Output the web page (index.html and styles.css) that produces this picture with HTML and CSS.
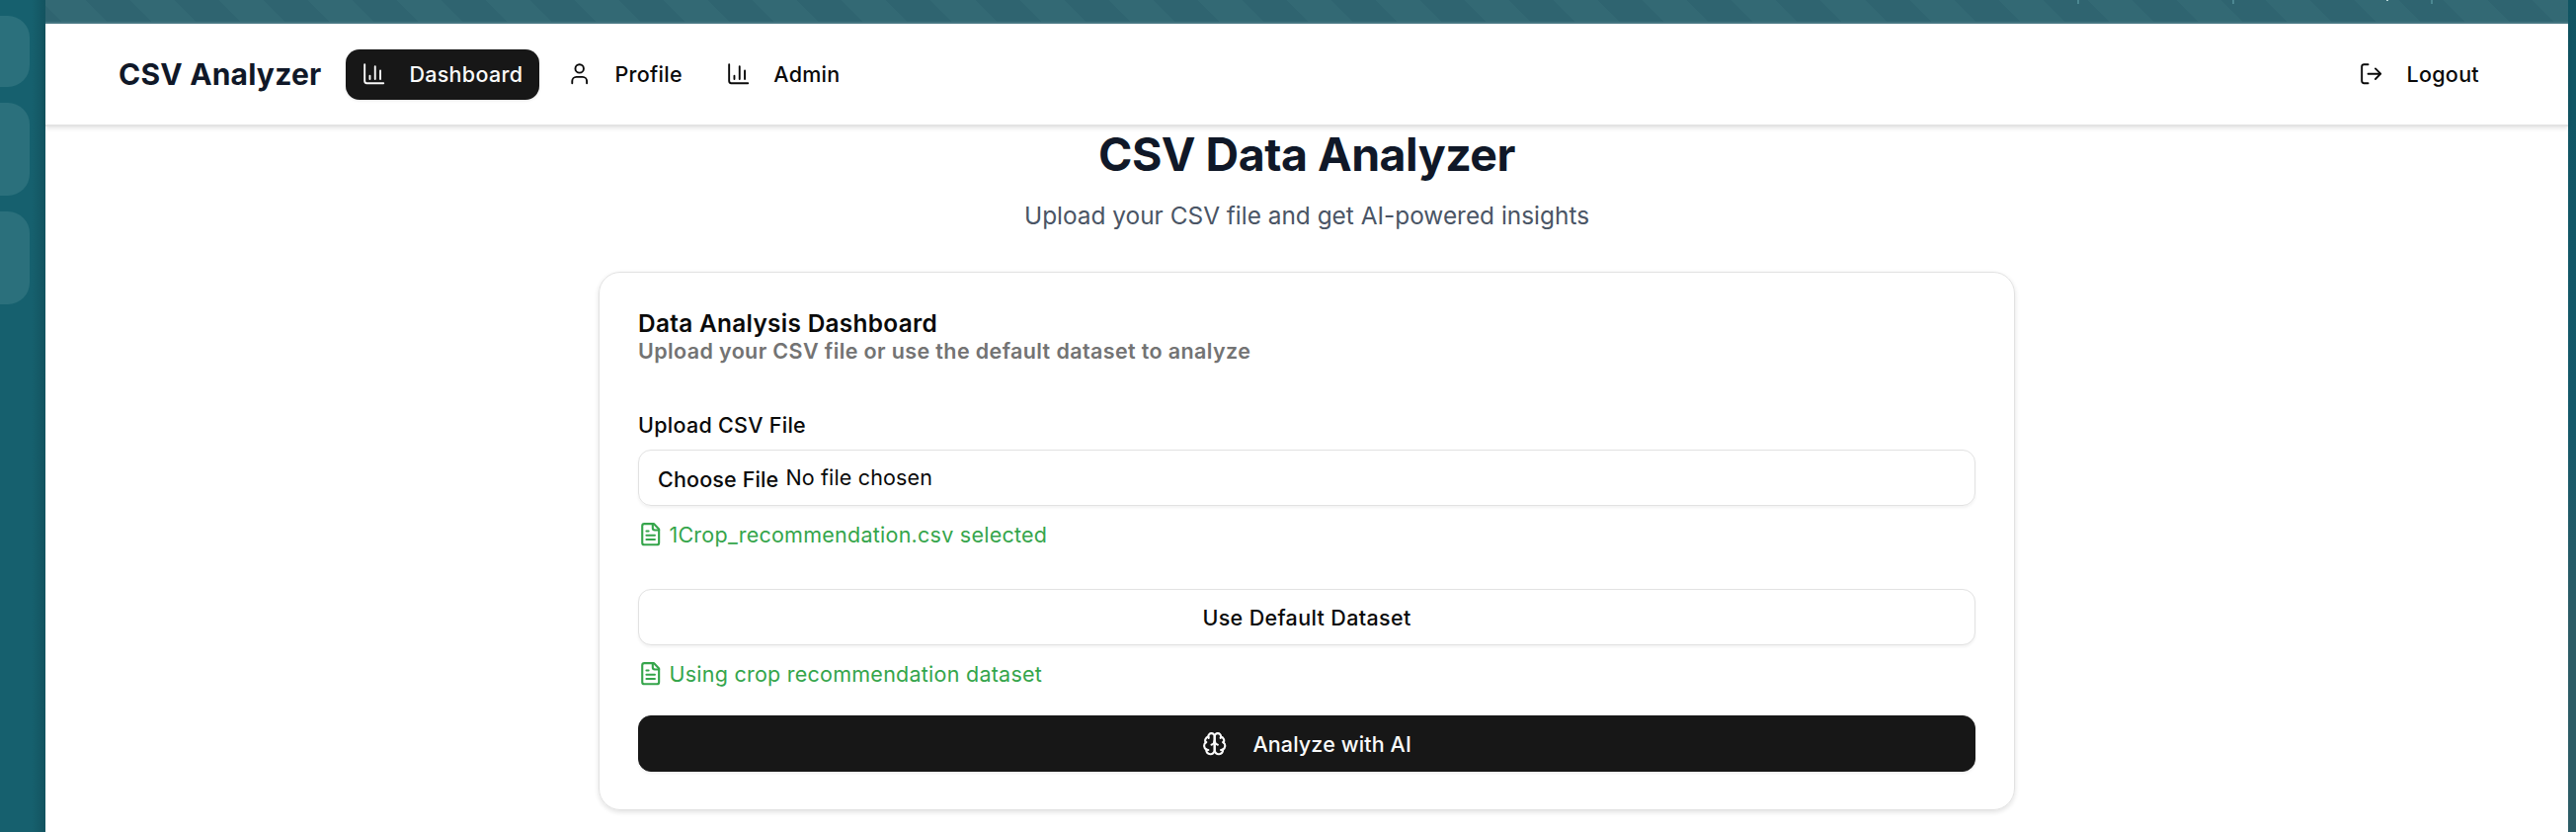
FILE: index.html
```html
<!DOCTYPE html>
<html lang="en">
<head>
<meta charset="utf-8">
<title>CSV Analyzer</title>
<link rel="stylesheet" href="styles.css">
</head>
<body>
<div class="desktop">
  <aside class="dock"><span class="tile tile-short"></span><span class="tile"></span><span class="tile"></span></aside>
  <div class="window">
    <div class="titlebar"><i class="tick t1"></i><i class="tick t2"></i><i class="dot"></i><i class="tick t3"></i></div>
    <nav class="nav">
      <span class="brand">CSV Analyzer</span>
      <a class="link active"><svg class="icon" viewBox="0 0 24 24"><path d="M3 3v16a2 2 0 0 0 2 2h16M18 17V9M13 17V5M8 17v-3"/></svg><span>Dashboard</span></a>
      <a class="link"><svg class="icon" viewBox="0 0 24 24"><path d="M19 21v-2a4 4 0 0 0-4-4H9a4 4 0 0 0-4 4v2"/><circle cx="12" cy="7" r="4"/></svg><span>Profile</span></a>
      <a class="link"><svg class="icon" viewBox="0 0 24 24"><path d="M3 3v16a2 2 0 0 0 2 2h16M18 17V9M13 17V5M8 17v-3"/></svg><span>Admin</span></a>
      <a class="link logout"><svg class="icon" viewBox="0 0 24 24"><path d="M9 21H5a2 2 0 0 1-2-2V5a2 2 0 0 1 2-2h4M16 17l5-5-5-5M21 12H9"/></svg><span>Logout</span></a>
    </nav>
    <main class="main">
      <h1 class="title">CSV Data Analyzer</h1>
      <p class="subtitle">Upload your CSV file and get AI-powered insights</p>
      <section class="card">
        <h2 class="card-title">Data Analysis Dashboard</h2>
        <p class="card-desc">Upload your CSV file or use the default dataset to analyze</p>
        <label class="label">Upload CSV File</label>
        <div class="field"><span class="choose">Choose File</span><span class="none">No file chosen</span></div>
        <p class="status"><svg class="icon file" viewBox="0 0 24 24"><path d="M15 2H6a2 2 0 0 0-2 2v16a2 2 0 0 0 2 2h12a2 2 0 0 0 2-2V7Z"/><path d="M14 2v4a2 2 0 0 0 2 2h4M10 9H8M16 13H8M16 17H8"/></svg><span>1Crop_recommendation.csv selected</span></p>
        <button class="button outline">Use Default Dataset</button>
        <p class="status"><svg class="icon file" viewBox="0 0 24 24"><path d="M15 2H6a2 2 0 0 0-2 2v16a2 2 0 0 0 2 2h12a2 2 0 0 0 2-2V7Z"/><path d="M14 2v4a2 2 0 0 0 2 2h4M10 9H8M16 13H8M16 17H8"/></svg><span>Using crop recommendation dataset</span></p>
        <button class="button solid"><svg class="icon file" viewBox="0 0 24 24"><path d="M12 5a3 3 0 1 0-5.997.125 4 4 0 0 0-2.526 5.77 4 4 0 0 0 .556 6.588A4 4 0 1 0 12 18Z"/><path d="M12 5a3 3 0 1 1 5.997.125 4 4 0 0 1 2.526 5.77 4 4 0 0 1-.556 6.588A4 4 0 1 1 12 18Z"/><path d="M15 13a4.500 4.500 0 0 1-3-4 4.500 4.500 0 0 1-3 4M17.599 6.500a3 3 0 0 0 .399-1.375M6.003 5.125A3 3 0 0 0 6.401 6.500M3.477 10.896a4 4 0 0 1 .585-.396M19.938 10.500a4 4 0 0 1 .585.396M6 18a4 4 0 0 1-1.967-.516M19.967 17.484A4 4 0 0 1 18 18"/></svg><span>Analyze with AI</span></button>
      </section>
    </main>
  </div>
  <div class="edge"></div>
</div>
</body>
</html>
```
FILE: styles.css
```css
* { box-sizing: border-box; margin: 0; }
body { font-family: Inter, sans-serif; color: #0a0a0a; }
.desktop { display: flex; height: 842px; overflow: hidden; background: #16606e; }
.dock { width: 46px; padding-top: 16px; display: flex; flex-direction: column; gap: 16px; background: linear-gradient(90deg, #16606e 70%, #13535f); }
.tile { width: 30px; height: 94px; border-radius: 0 22px 22px 0; background: #2b707c; }
.tile-short { height: 72px; }
.window { width: 2554px; background: #fff; }
.edge { width: 8px; background: linear-gradient(180deg, #105563, #14596a 50%, #2c5c66 75%, #2c5c66); }
.titlebar { position: relative; height: 24px; border-bottom: 2px solid #457682; background: repeating-linear-gradient(45deg, #2f6470 0 12px, #336974 12px 43.86px, #2f6470 43.86px 63.71px); }
.tick, .dot { position: absolute; top: 0; width: 2px; height: 4px; background: #4b8791; }
.t1 { left: 2057px; } .t2 { left: 2214px; } .t3 { left: 2415px; }
.dot { left: 2370px; height: 1px; background: #b5d5d8; }
.nav { height: 104px; border-bottom: 2px solid #e3e3e3; box-shadow: 0 2px 4px rgba(0,0,0,.1); display: flex; align-items: center; gap: 12px; padding: 0 74px; position: relative; }
.brand { width: 218px; font-size: 30px; font-weight: 700; color: #101828; letter-spacing: .2px; white-space: nowrap; }
.link { display: flex; align-items: center; height: 51px; padding: 0 16px; border-radius: 14px; font-size: 21.5px; font-weight: 500; gap: 23px; letter-spacing: .3px; }
.active { background: #171717; color: #fafafa; width: 196px; box-shadow: 0 1px 3px rgba(0,0,0,.1); }
.logout { margin-left: auto; }
.icon { width: 25.4px; height: 25.4px; flex: none; fill: none; stroke: currentColor; stroke-width: 1.8; stroke-linecap: round; stroke-linejoin: round; }
.file { stroke-width: 2; }
.main { display: flex; flex-direction: column; align-items: center; }
.title { font-size: 46.5px; line-height: 56px; font-weight: 700; color: #101828; letter-spacing: -.5px; }
.subtitle { font-size: 24.4px; line-height: 36px; color: #4a5565; margin-top: 16px; }
.card { width: 1434px; height: 545px; margin-top: 39px; border: 1px solid #e2e2e2; border-radius: 22px; padding: 38px 39px; box-shadow: 0 2px 5px rgba(0,0,0,.12); display: flex; flex-direction: column; align-items: stretch; }
.card-title { font-size: 24.4px; line-height: 26px; font-weight: 600; letter-spacing: .3px; }
.card-desc { font-size: 21.5px; line-height: 30px; font-weight: 600; color: #737373; letter-spacing: .38px; }
.label { font-size: 21.5px; line-height: 24px; font-weight: 500; margin-top: 48px; letter-spacing: .28px; }
.field, .button { flex: none; height: 57px; border: 1px solid #e2e2e2; border-radius: 13px; box-shadow: 0 2px 3px rgba(0,0,0,.05); }
.field { display: flex; align-items: center; margin-top: 13px; padding-left: 19px; gap: 7px; font-size: 21.5px; letter-spacing: .15px; }
.choose { font-weight: 500; padding-top: 2px; }
.none { margin-top: -1px; }
.status { display: flex; align-items: center; gap: 6px; height: 28px; margin-top: 15px; color: #35a54b; font-size: 21.5px; letter-spacing: .25px; }
.button { font: 500 21.5px Inter, sans-serif; display: flex; align-items: center; justify-content: center; background: #fff; color: #0a0a0a; margin-top: 41px; padding: 0; letter-spacing: .35px; }
.solid { background: #171717; border-color: #171717; color: #fafafa; margin-top: 28px; gap: 26px; letter-spacing: .12px; }
```
